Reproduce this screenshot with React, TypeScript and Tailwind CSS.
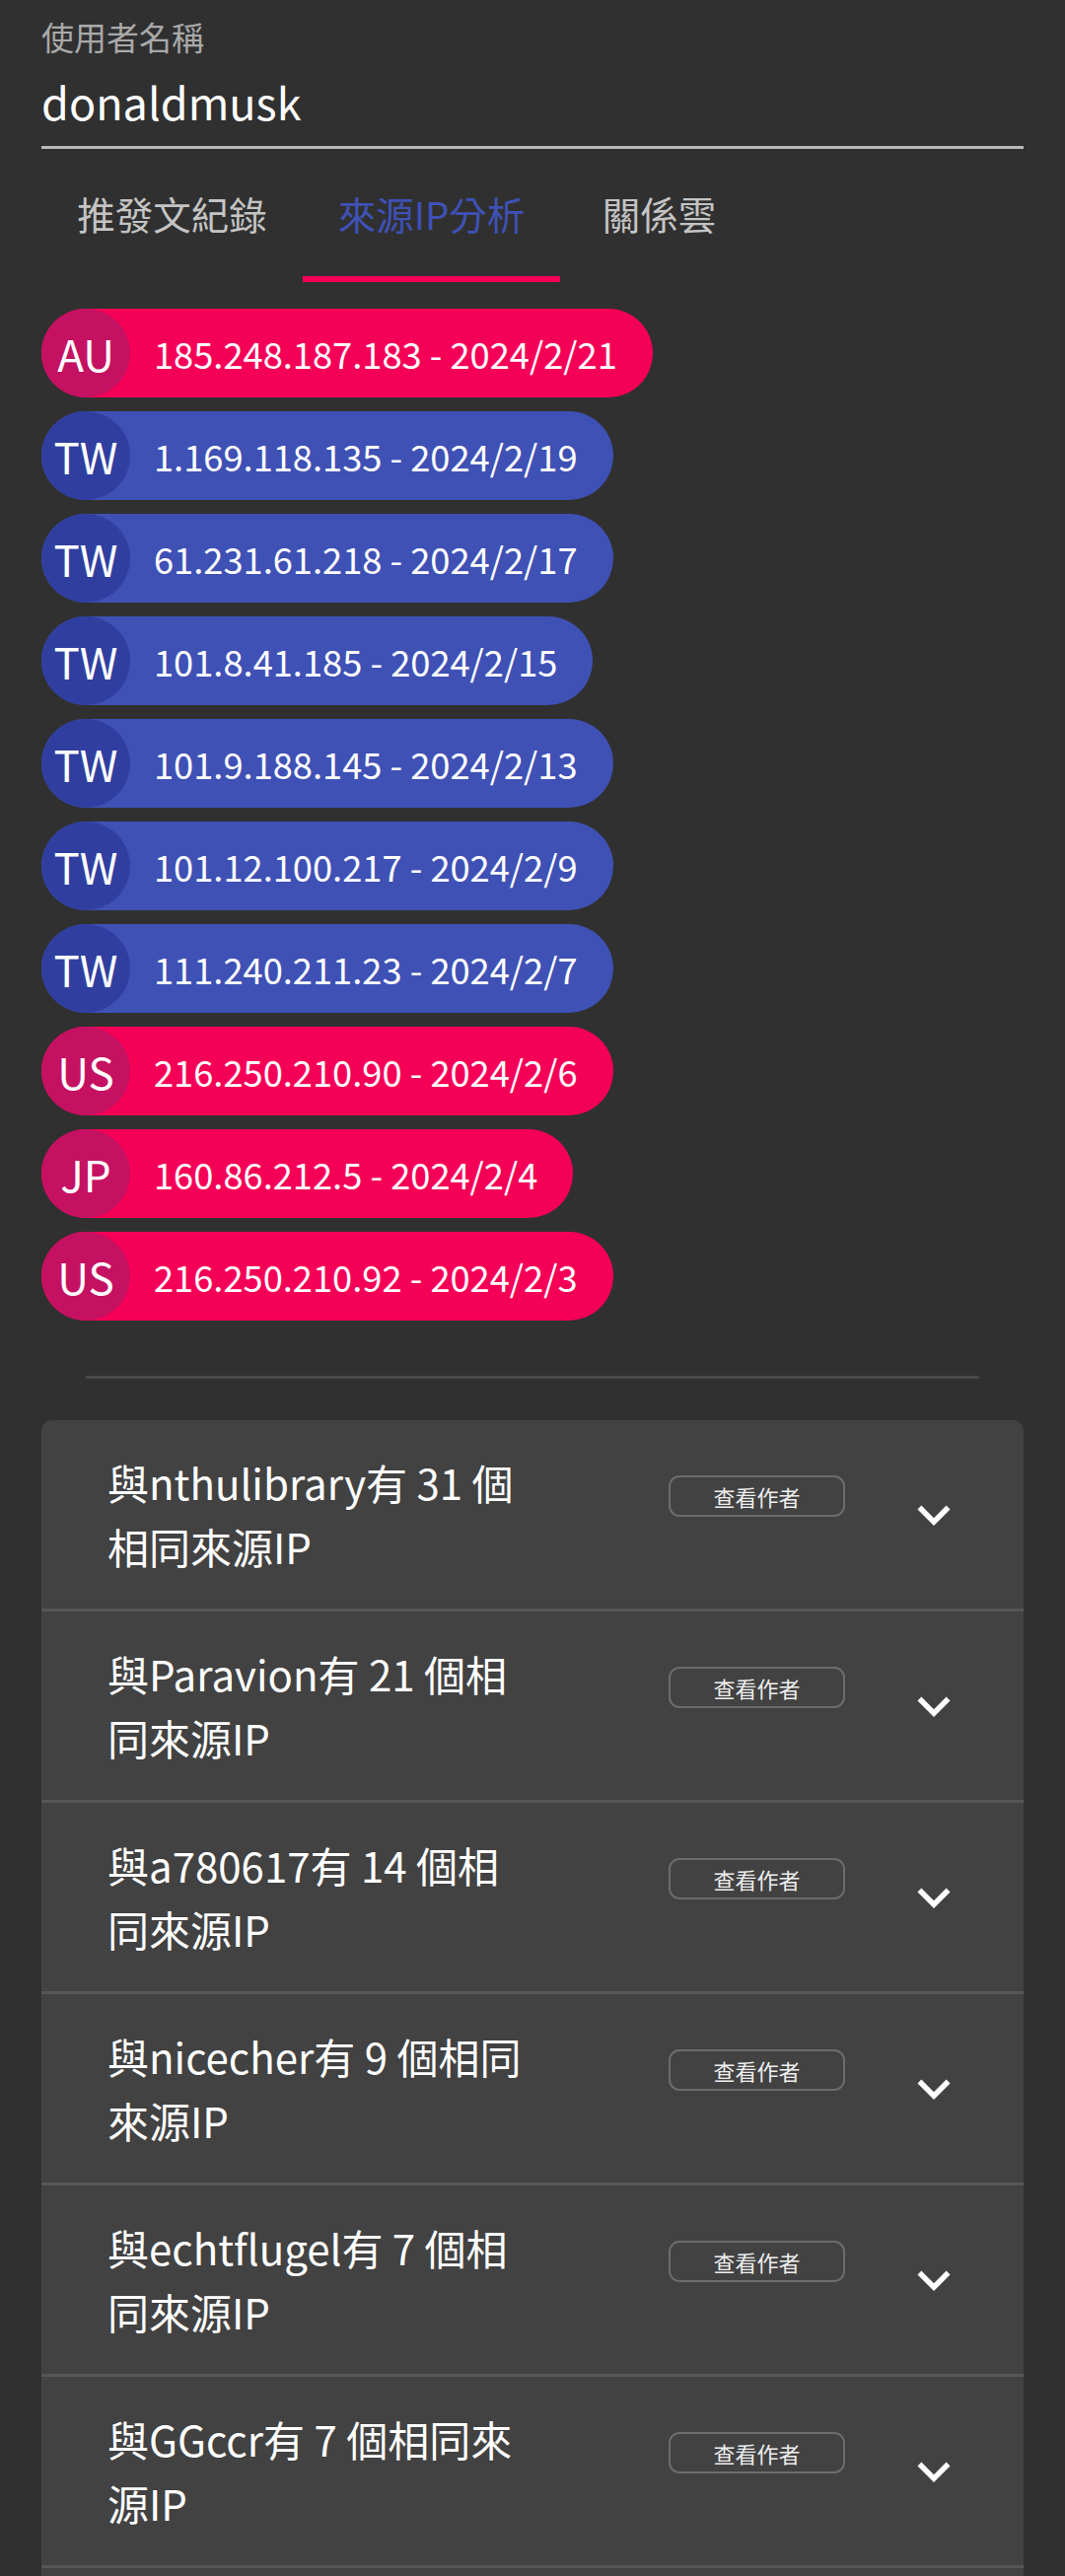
import React from "react";

type Chip = { cc: string; ip: string; date: string };

const chips: Chip[] = [
  { cc: "AU", ip: "185.248.187.183", date: "2024/2/21" },
  { cc: "TW", ip: "1.169.118.135", date: "2024/2/19" },
  { cc: "TW", ip: "61.231.61.218", date: "2024/2/17" },
  { cc: "TW", ip: "101.8.41.185", date: "2024/2/15" },
  { cc: "TW", ip: "101.9.188.145", date: "2024/2/13" },
  { cc: "TW", ip: "101.12.100.217", date: "2024/2/9" },
  { cc: "TW", ip: "111.240.211.23", date: "2024/2/7" },
  { cc: "US", ip: "216.250.210.90", date: "2024/2/6" },
  { cc: "JP", ip: "160.86.212.5", date: "2024/2/4" },
  { cc: "US", ip: "216.250.210.92", date: "2024/2/3" },
];

const items: string[][] = [
  ["與nthulibrary有 31 個", "相同來源IP"],
  ["與Paravion有 21 個相", "同來源IP"],
  ["與a780617有 14 個相", "同來源IP"],
  ["與nicecher有 9 個相同", "來源IP"],
  ["與echtflugel有 7 個相", "同來源IP"],
  ["與GGccr有 7 個相同來", "源IP"],
];

function ExpandMore() {
  return (
    <svg width="66" height="66" viewBox="0 0 24 24" fill="#ffffff" aria-hidden="true">
      <path d="M16.59 8.59 12 13.17 7.41 8.59 6 10l6 6 6-6z" />
    </svg>
  );
}

function IpChip({ chip }: { chip: Chip }) {
  const tw = chip.cc === "TW";
  return (
    <div
      className={
        tw
          ? "inline-flex h-[90px] items-center self-start rounded-full bg-[#3f51b5] text-white"
          : "inline-flex h-[90px] items-center self-start rounded-full bg-[#f50057] text-white"
      }
    >
      <div
        className={
          tw
            ? "flex h-[90px] w-[90px] items-center justify-center rounded-full bg-[#303f9f] text-[44px]"
            : "flex h-[90px] w-[90px] items-center justify-center rounded-full bg-[#c51162] text-[44px]"
        }
      >
        {chip.cc}
      </div>
      <span className="pl-[24px] pr-[36px] text-[36.25px]">
        {chip.ip} - {chip.date}
      </span>
    </div>
  );
}

export default function App() {
  return (
    <div className="min-h-screen bg-[#303030] font-['Noto_Sans_CJK_TC','Noto_Sans',sans-serif] text-white">
      <div className="px-[42px]">
        {/* text field */}
        <div className="pt-[21px]">
          <div className="text-[33px] leading-[33px] text-[#a9a9a9]">使用者名稱</div>
          <div className="mt-[21px] border-b-[3px] border-[#b8b8b8] pb-[17px] text-[45px] leading-[56px] text-white">
            donaldmusk
          </div>
        </div>

        {/* tabs */}
        <div className="mt-[3px] flex h-[132px]">
          <div className="flex w-[265px] items-center justify-center border-b-[6px] border-transparent text-[38.5px] text-[#c4c4c4]">
            推發文紀錄
          </div>
          <div className="flex w-[261px] items-center justify-center border-b-[6px] border-[#f50057] text-[38.5px] text-[#3f51b5]">
            來源IP分析
          </div>
          <div className="flex w-[201px] items-center justify-center border-b-[6px] border-transparent text-[38.5px] text-[#c4c4c4]">
            關係雲
          </div>
        </div>

        {/* chips */}
        <div className="mt-[27px] flex flex-col gap-[14px]">
          {chips.map((c, i) => (
            <IpChip key={i} chip={c} />
          ))}
        </div>

        {/* divider */}
        <div className="mx-[45px] mt-[56px] h-[3px] bg-[#494949]" />

        {/* accordion */}
        <div className="mt-[42px] overflow-hidden rounded-[11px] bg-[#424242]">
          {items.map((lines, i) => (
            <div
              key={i}
              className={
                i === 0
                  ? "flex h-[191px] items-center pl-[67px] pr-[58px]"
                  : "flex h-[194px] items-center border-t-[3px] border-[#575757] pl-[67px] pr-[58px]"
              }
            >
              <div className="w-[569px] shrink-0 self-center text-[42px] leading-[64.5px] text-white">
                {lines.map((l, j) => (
                  <span key={j} className="block whitespace-nowrap">
                    {l}
                  </span>
                ))}
              </div>
              <div className="mt-[56px] flex h-[42px] w-[179px] shrink-0 items-center justify-center self-start rounded-[11px] border-2 border-[#6c6c6c] text-[22px] text-[#eeeeee]">
                查看作者
              </div>
              <div className="ml-auto flex h-[66px] w-[66px] items-center justify-center">
                <ExpandMore />
              </div>
            </div>
          ))}
          <div className="h-[194px] border-t-[3px] border-[#575757]" />
        </div>
      </div>
    </div>
  );
}
